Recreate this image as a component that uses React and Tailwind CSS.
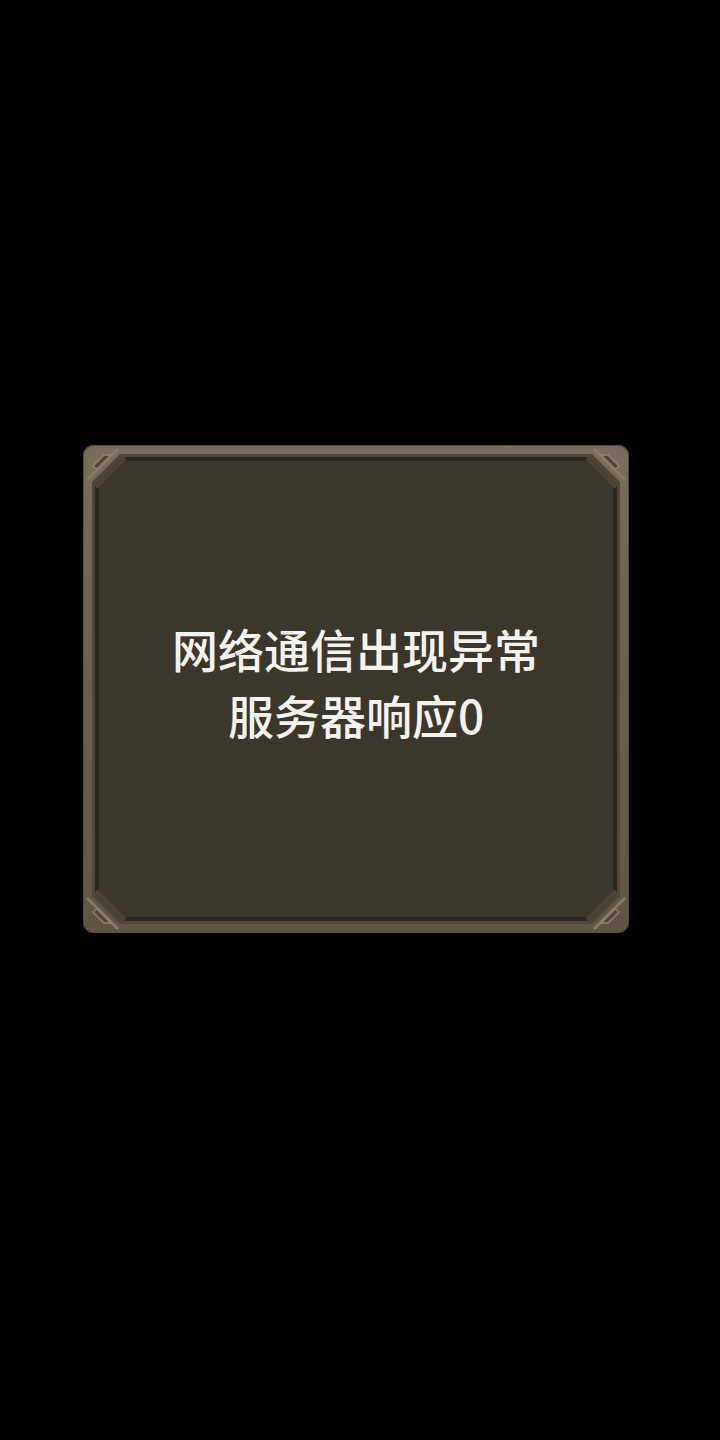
import React from 'react'

const cut28 =
  '[clip-path:polygon(28px_0,calc(100%_-_28px)_0,100%_28px,100%_calc(100%_-_28px),calc(100%_-_28px)_100%,28px_100%,0_calc(100%_-_28px),0_28px)]'
const cut24 =
  '[clip-path:polygon(24px_0,calc(100%_-_24px)_0,100%_24px,100%_calc(100%_-_24px),calc(100%_-_24px)_100%,24px_100%,0_calc(100%_-_24px),0_24px)]'

function CornerMark({ className }) {
  // beveled notch that sits in each corner of the frame
  return (
    <svg
      viewBox="0 0 44 44"
      className={`absolute w-[44px] h-[44px] pointer-events-none ${className}`}
    >
      <path d="M5 34 L34 5" stroke="#847966" strokeWidth="3" strokeLinecap="round" />
      <path d="M10 21 L21 10 L28 10 L14 24 Z" fill="#4e4639" stroke="#8e836f" strokeWidth="1.5" />
      <path d="M13 42 L42 13" stroke="#4a4336" strokeWidth="4" />
    </svg>
  )
}

export default function App() {
  return (
    <div className="w-[720px] h-[1440px] bg-black pt-[445px] pl-[83px]">
      {/* Dialog frame */}
      <div className="relative w-[546px] h-[488px] rounded-[11px] bg-gradient-to-b from-[#786d5c] via-[#6a604f] to-[#5e5545] p-[9px] shadow-[inset_0_0_0_1px_#554c3f]">
        <div className={`w-full h-full bg-[#4d4639] p-[3px] ${cut28}`}>
          <div className={`w-full h-full bg-[#2b2720] p-[4px] ${cut28}`}>
            <div
              className={`w-full h-full bg-[#3b372c] flex flex-col items-center justify-center pb-[16px] ${cut24}`}
            >
              <p
                className="text-[46px] font-medium leading-[66px] text-[#f5f3ef] text-center"
                style={{ fontFamily: '"Noto Sans CJK SC", "Noto Sans", sans-serif' }}
              >
                网络通信出现异常
                <br />
                服务器响应0
              </p>
            </div>
          </div>
        </div>

        <CornerMark className="left-0 top-0" />
        <CornerMark className="right-0 top-0 -scale-x-100" />
        <CornerMark className="left-0 bottom-0 -scale-y-100" />
        <CornerMark className="right-0 bottom-0 -scale-100" />
      </div>
    </div>
  )
}
